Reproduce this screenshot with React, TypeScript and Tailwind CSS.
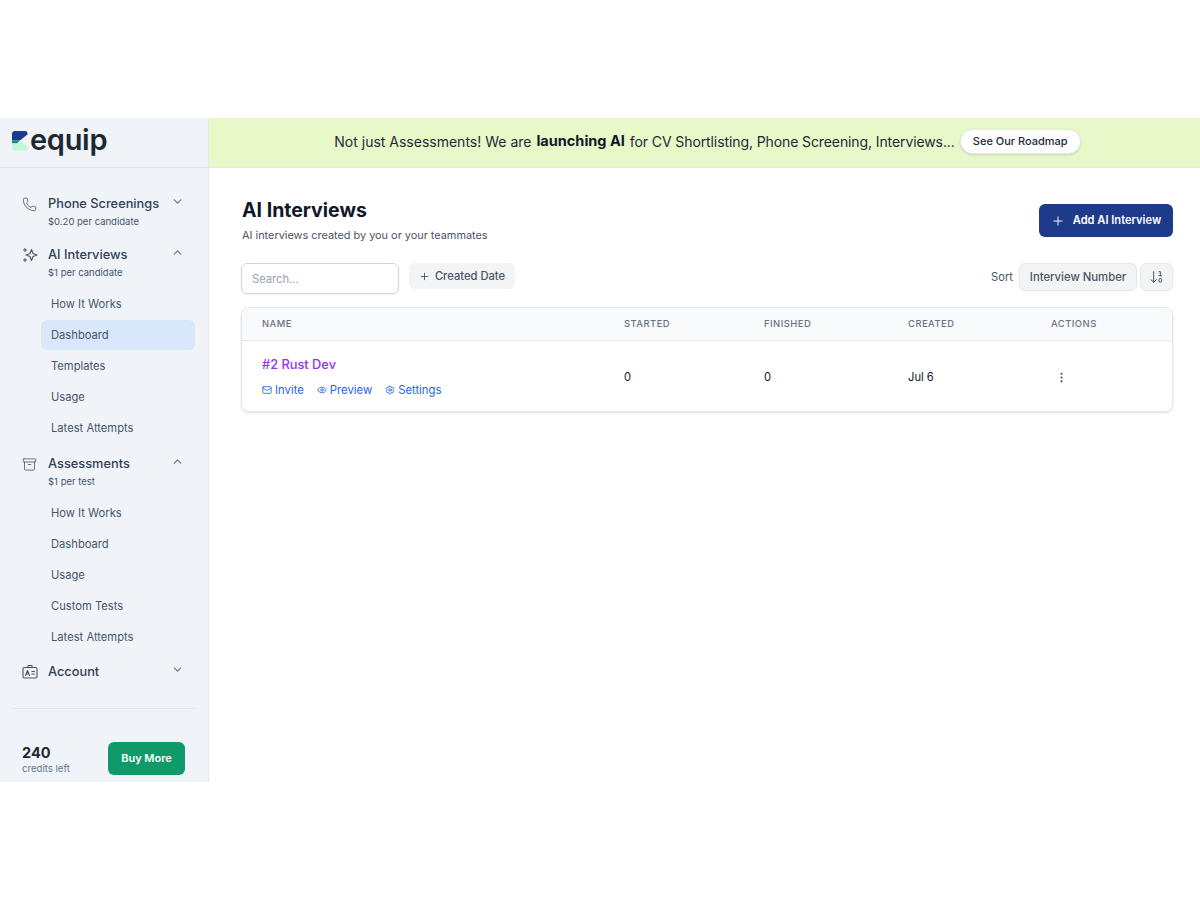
import React from 'react';
import { Phone, ChevronDown, ChevronUp, Archive, Plus, Mail, Eye, Settings, MoreVertical, ArrowDown10 } from 'lucide-react';

const Logo = () => (
  <svg width="16" height="20" viewBox="0 0 16 20" className="shrink-0">
    <path d="M0 3 Q0 0 3 0 H13 Q15.500 0 15.500 2.500 L15.500 3.500 L8 9.500 H0 Z" fill="#1e3a8a" />
    <path d="M0 9.500 H8 L5 12.500 H0 Z" fill="#0f8f7e" />
    <path d="M0 12.500 H5 L8 9.500 L15.500 15.500 V17 Q15.500 19.500 13 19.500 H3 Q0 19.500 0 16.500 Z" fill="#c6f6d9" />
  </svg>
);

const SparkIcon = () => (
  <svg width="16" height="16" viewBox="0 0 16 16" fill="none" stroke="currentColor" strokeWidth="1.100" strokeLinejoin="round" strokeLinecap="round">
    <path d="M9.500 2.500 L11 6.500 L15 8 L11 9.500 L9.500 13.500 L8 9.500 L4 8 L8 6.500 Z" />
    <path d="M3 1.500 V4.500 M1.500 3 H4.500" />
    <path d="M3 11.500 V14.500 M1.500 13 H4.500" />
  </svg>
);

const BadgeIcon = () => (
  <svg width="16" height="16" viewBox="0 0 16 16" fill="none" stroke="currentColor" strokeWidth="1.100" strokeLinejoin="round" strokeLinecap="round">
    <rect x="1" y="3.500" width="14" height="10.500" rx="1.500" />
    <path d="M6 3.500 V1.500 H10 V3.500" />
    <path d="M3.500 11.500 L5.500 6.500 L7.500 11.500 M4.300 10 H6.700" />
    <path d="M9.800 7.500 H12.500 M9.800 10 H12.500" />
  </svg>
);

const SubItem = ({ label, active }: { label: string; active?: boolean }) => (
  <div className={`ml-[41px] mr-[13px] h-[30px] mb-px flex items-center px-[10px] rounded-md text-[11.200px] text-slate-600 ${active ? 'bg-[#d9e7fb]' : ''}`}>
    {label}
  </div>
);

const NavGroup = ({ icon, label, sub, open }: { icon: React.ReactNode; label: string; sub?: string; open?: boolean }) => (
  <div className="flex pl-[22px] pr-[24px] items-start">
    <div className="w-[26px] h-[20px] mt-px flex items-center text-slate-600 shrink-0">{icon}</div>
    <div className="flex-1 min-w-0 pt-px">
      <div className="text-[12.800px] leading-[20px] font-medium text-slate-700">{label}</div>
      {sub && <div className="text-[9.500px] leading-[16px] text-slate-600">{sub}</div>}
    </div>
    <div className="text-slate-500 mt-[2px]">
      {open ? <ChevronUp size={13} /> : <ChevronDown size={13} />}
    </div>
  </div>
);

export default function App() {
  return (
    <div className="bg-white h-[900px] pt-[118px] font-['Inter',sans-serif] text-slate-900">
      <div className="h-[664px] flex">
        {/* Sidebar */}
        <aside className="w-[209px] shrink-0 bg-[#f0f4f9] border-r border-[#e5e9ef] flex flex-col">
          <div className="h-[50px] shrink-0 border-b border-[#e2e6ec] flex items-center pl-[12px] gap-[3px] pb-[4px]">
            <Logo />
            <span className="text-[29px] leading-none font-semibold text-[#1f2730] tracking-[-0.3px] -mt-[2px] -ml-px">equip</span>
          </div>

          <div className="pt-[25px]">
            <NavGroup icon={<Phone size={15} strokeWidth={1.300} />} label="Phone Screenings" sub="$0.20 per candidate" />
            <div className="h-[14px]" />
            <NavGroup icon={<SparkIcon />} label="AI Interviews" sub="$1 per candidate" open />
            <div className="h-[8px]" />
            <SubItem label="How It Works" />
            <SubItem label="Dashboard" active />
            <SubItem label="Templates" />
            <SubItem label="Usage" />
            <SubItem label="Latest Attempts" />
            <div className="h-[9px]" />
            <NavGroup icon={<Archive size={15} strokeWidth={1.300} />} label="Assessments" sub="$1 per test" open />
            <div className="h-[8px]" />
            <SubItem label="How It Works" />
            <SubItem label="Dashboard" />
            <SubItem label="Usage" />
            <SubItem label="Custom Tests" />
            <SubItem label="Latest Attempts" />
            <div className="h-[8px]" />
            <NavGroup icon={<BadgeIcon />} label="Account" />
          </div>

          <div className="mt-[26px] mx-[13px] border-t border-[#e3e7ed]" />

          <div className="mt-[32px] pl-[22px] pr-[23px] flex items-center justify-between">
            <div className="mt-[3px]">
              <div className="text-[14.500px] leading-[18px] font-bold text-[#1f2730]">240</div>
              <div className="text-[9.600px] leading-[13px] text-slate-500">credits left</div>
            </div>
            <div className="w-[77px] h-[33px] rounded-md bg-[#0f9a6a] text-white text-[11px] font-semibold flex items-center justify-center">Buy More</div>
          </div>
        </aside>

        <div className="flex-1 min-w-0 flex flex-col">
          {/* Banner */}
          <div className="h-[50px] shrink-0 bg-[#e9f8c8] border-b border-[#e8ecdf] flex items-center justify-center text-[14px] text-[#1f2937] pl-[6px] pb-[3px]">
            <span>Not just Assessments! We are</span>
            <span className="font-bold text-[14.500px] mx-[5px] text-[#111827]">launching AI</span>
            <span className="tracking-[-0.1px]">for CV Shortlisting, Phone Screening, Interviews...</span>
            <div className="ml-[5px] h-[25px] w-[121px] rounded-full bg-white border border-slate-200 shadow-sm flex items-center justify-center text-[11px] font-medium text-slate-800">See Our Roadmap</div>
          </div>

          {/* Main */}
          <main className="pl-[32px] pr-[27px] pt-[29px]">
            <div className="flex items-start justify-between">
              <div className="ml-px">
                <h1 className="text-[19.500px] leading-[26px] font-bold text-[#111827]">AI Interviews</h1>
                <p className="text-[10.900px] leading-[16px] mt-[4px] text-gray-600">AI interviews created by you or your teammates</p>
              </div>
              <div className="mt-[7px] w-[134px] h-[33px] rounded-md bg-[#1e3a8a] text-white text-[11.100px] font-semibold flex items-center justify-center gap-[8px]">
                <Plus size={14} strokeWidth={1.600} />
                Add AI Interview
              </div>
            </div>

            <div className="flex items-start mt-[20px]">
              <input readOnly placeholder="Search..." className="w-[158px] h-[31px] px-[10px] rounded-md bg-white border border-gray-300 shadow-xs text-[11.200px] placeholder:text-gray-400" />
              <div className="ml-[10px] h-[26px] w-[106px] rounded-md bg-gray-100 flex items-center justify-center gap-[5px] text-[11.200px] font-medium text-gray-600">
                <Plus size={11} />
                Created Date
              </div>
              <div className="ml-auto flex items-center">
                <span className="text-[11.200px] text-gray-600 mr-[6px]">Sort</span>
                <div className="h-[28px] w-[118px] rounded-md bg-gray-100 border border-gray-200 flex items-center justify-center text-[11.300px] font-medium text-gray-600">Interview Number</div>
                <div className="ml-[3px] h-[28px] w-[33px] rounded-md bg-gray-100 border border-gray-200 flex items-center justify-center text-gray-600">
                  <ArrowDown10 size={16} strokeWidth={1.500} />
                </div>
              </div>
            </div>

            <div className="mt-[13px] rounded-lg border border-gray-200 shadow-sm overflow-hidden">
              <div className="h-[33px] bg-gray-50 border-b border-gray-200 grid grid-cols-[362px_140px_144px_143px_1fr] pl-[20px] items-center text-[9.400px] font-medium tracking-[0.5px] text-gray-500">
                <div>NAME</div>
                <div>STARTED</div>
                <div>FINISHED</div>
                <div>CREATED</div>
                <div>ACTIONS</div>
              </div>
              <div className="h-[70px] pt-[2px] grid grid-cols-[362px_140px_144px_143px_1fr] pl-[20px] items-center text-[11.200px] text-gray-900">
                <div>
                  <div className="text-[12.800px] leading-[18px] font-medium text-[#9333ea]">#2 Rust Dev</div>
                  <div className="flex items-center gap-[13px] mt-[8px] text-[11.300px] leading-[16px] text-[#2563eb]">
                    <span className="flex items-center gap-[3px]"><Mail size={10} />Invite</span>
                    <span className="flex items-center gap-[3px]"><Eye size={10} />Preview</span>
                    <span className="flex items-center gap-[3px]"><Settings size={10} />Settings</span>
                  </div>
                </div>
                <div>0</div>
                <div>0</div>
                <div>Jul 6</div>
                <div className="text-gray-600 pl-[4px]"><MoreVertical size={13} /></div>
              </div>
            </div>
          </main>
        </div>
      </div>
    </div>
  );
}
